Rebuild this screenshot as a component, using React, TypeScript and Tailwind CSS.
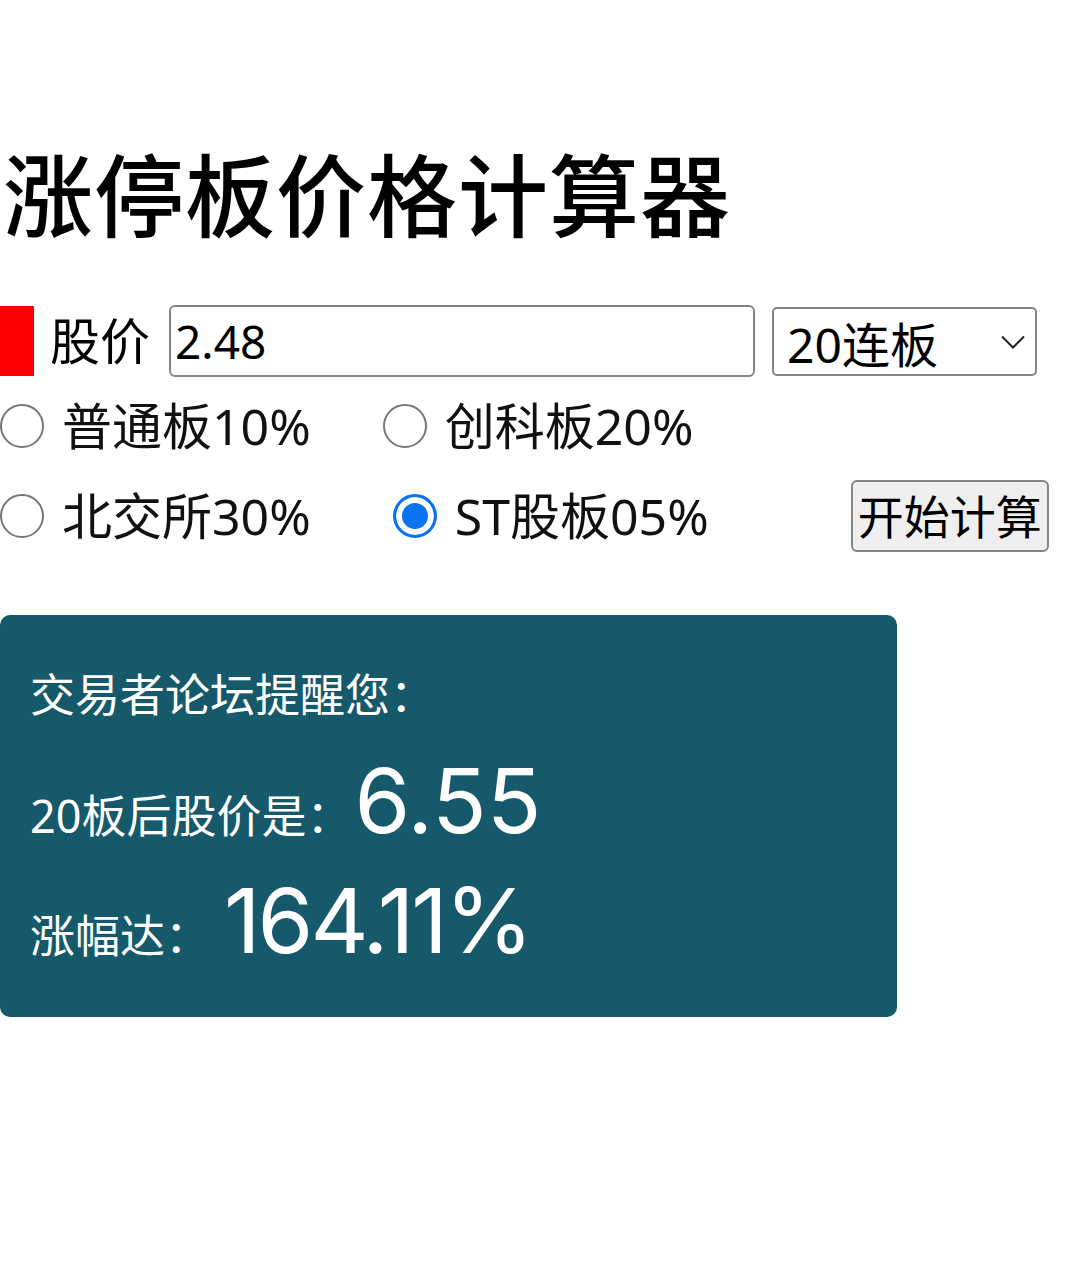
import React, { useState } from "react";

const font = "font-['Noto_Sans','Noto_Sans_CJK_SC',sans-serif]";

const boards = [
  { id: "main", label: "普通板10%", rate: 0.1 },
  { id: "star", label: "创科板20%", rate: 0.2 },
  { id: "bse", label: "北交所30%", rate: 0.3 },
  { id: "st", label: "ST股板05%", rate: 0.05 },
];

const Radio: React.FC<{
  label: string;
  checked: boolean;
  onChange: () => void;
  className?: string;
}> = ({ label, checked, onChange, className }) => (
  <label className={`flex items-center gap-[18px] ${className ?? ""}`}>
    <input
      type="radio"
      name="board"
      checked={checked}
      onChange={onChange}
      className="appearance-none m-0 w-[44px] h-[44px] rounded-full border-2 border-[#767676] bg-white checked:border-[3px] checked:border-[#0a74f2] checked:bg-[#0a74f2] checked:shadow-[inset_0_0_0_6px_white]"
    />
    <span className="text-[50px] leading-[60px] text-[#111]">{label}</span>
  </label>
);

export default function App() {
  const [price, setPrice] = useState("2.48");
  const [days, setDays] = useState(20);
  const [board, setBoard] = useState("st");

  const rate = boards.find((b) => b.id === board)?.rate ?? 0.05;
  let result = parseFloat(price) || 0;
  for (let i = 0; i < days; i++) {
    result = Math.round(result * (1 + rate) * 100) / 100;
  }
  const base = parseFloat(price) || 1;
  const pct = ((result - base) / base) * 100;

  return (
    <div className={`${font} bg-white min-h-[1276px] w-[1080px] text-black`}>
      <h1 className="pt-[141px] text-[90px] leading-[108px] font-medium tracking-[1px] pl-[3px]">
        涨停板价格计算器
      </h1>

      <div className="mt-[56px] flex items-center h-[72px]">
        <span className="w-[34px] h-[70px] bg-[#ff0000]" />
        <span className="ml-[16px] text-[50px] leading-[60px]">股价</span>
        <input
          value={price}
          onChange={(e) => setPrice(e.target.value)}
          className="ml-[19px] w-[586px] h-[72px] border-2 border-[#858585] rounded-[6px] px-[4px] text-[46px] outline-none"
        />
        <div className="relative ml-[17px]">
          <select
            value={days}
            onChange={(e) => setDays(Number(e.target.value))}
            className="appearance-none w-[265px] h-[69px] border-2 border-[#858585] rounded-[5px] pl-[13px] text-[48px] bg-white outline-none"
          >
            {Array.from({ length: 20 }, (_, i) => i + 1).map((n) => (
              <option key={n} value={n}>
                {n}连板
              </option>
            ))}
          </select>
          <svg
            className="absolute right-[12px] top-[28px] pointer-events-none"
            width="24"
            height="14"
            viewBox="0 0 24 14"
            fill="none"
            stroke="#222"
            strokeWidth="2"
          >
            <path d="M1 1.5 L12 12.5 L23 1.5" />
          </svg>
        </div>
      </div>

      <div className="mt-[19px] flex items-center h-[60px]">
        <Radio
          label={boards[0].label}
          checked={board === "main"}
          onChange={() => setBoard("main")}
        />
        <Radio
          label={boards[1].label}
          checked={board === "star"}
          onChange={() => setBoard("star")}
          className="ml-[72px]"
        />
      </div>

      <div className="mt-[24px] flex items-center h-[72px]">
        <Radio
          label={boards[2].label}
          checked={board === "bse"}
          onChange={() => setBoard("bse")}
        />
        <Radio
          label={boards[3].label}
          checked={board === "st"}
          onChange={() => setBoard("st")}
          className="ml-[82px]"
        />
        <button className="ml-[142px] w-[198px] h-[72px] bg-[#efefef] border-2 border-[#858585] rounded-[6px] text-[46px] leading-none">
          开始计算
        </button>
      </div>

      <div className="mt-[63px] w-[897px] rounded-[10px] bg-[#16596a] text-white pl-[30px] pt-[50px] pb-[46px]">
        <p className="text-[45px] leading-[60px]">交易者论坛提醒您：</p>
        <p className="mt-[26px] flex items-baseline">
          <span className="text-[45px]">{days}板后股价是：</span>
          <span className="ml-[3px] font-['Inter',sans-serif] text-[90px] leading-[100px]">
            {result.toFixed(2)}
          </span>
        </p>
        <p className="mt-[20px] flex items-baseline">
          <span className="text-[45px]">涨幅达：</span>
          <span className="ml-[14px] font-['Inter',sans-serif] text-[90px] leading-[100px] tracking-[-3px]">
            {pct.toFixed(2)}%
          </span>
        </p>
      </div>
    </div>
  );
}
